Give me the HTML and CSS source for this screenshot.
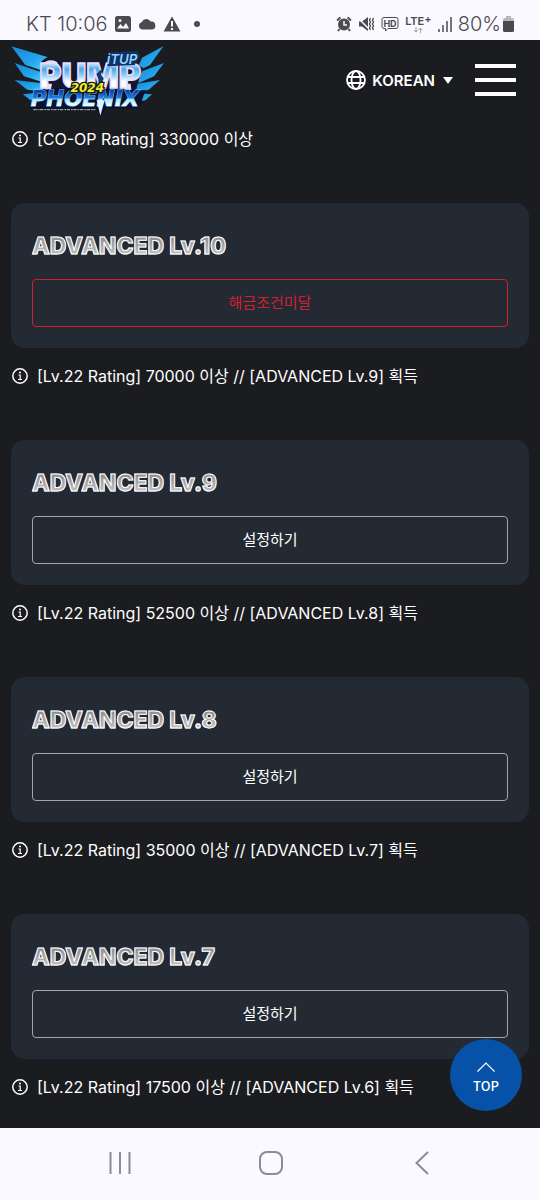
FILE: index.html
```
<!DOCTYPE html>
<html lang="ko">
<head>
    <meta charset="UTF-8">
    <meta name="viewport" content="width=device-width, initial-scale=1.0">
    <title>PUMP IT UP PHOENIX 2024</title>
    <link rel="stylesheet" href="styles.css">
</head>
<body>
    <div class="status-bar">
        <div class="status-left">
            <span class="status-text">KT 10:06</span>
            <svg width="16" height="16" viewBox="0 0 16 16"><rect width="16" height="16" rx="2.5" fill="#4b4b4f"/><path d="M2 12.5 5.5 8l2.5 3 3-4 3 5.500Z" fill="#faf9ff"/><circle cx="5" cy="4.500" r="1.500" fill="#faf9ff"/></svg>
            <svg width="18" height="12" viewBox="0 0 18 12"><path d="M4 11.500a3.700 3.700 0 0 1-.3-7.200A5 5 0 0 1 12.700 3.600 4 4 0 0 1 14 11.500Z" fill="#4b4b4f"/></svg>
            <svg width="18" height="16" viewBox="0 0 18 16"><path d="M9 .5 17.500 15.500H.5Z" fill="#4b4b4f"/><path d="M9 5v5.500M9 12v2" stroke="#faf9ff" stroke-width="2"/></svg>
            <span class="status-dot"></span>
        </div>
        <div class="status-right">
            <svg width="16" height="16" viewBox="0 0 16 16"><circle cx="8" cy="8.500" r="6" fill="#4b4b4f"/><path d="M1 4.500 4.500 1.500M15 4.500 11.500 1.500M3.500 13 2 15M12.500 13 14 15" stroke="#4b4b4f" stroke-width="2"/><path d="M8 5v4h3" fill="none" stroke="#faf9ff" stroke-width="1.500"/></svg>
            <svg width="17" height="16" viewBox="0 0 17 16"><path d="M1 5.500h3L10 1v14l-6-4.500H1Z" fill="#4b4b4f"/><path d="M0 2 12 14" stroke="#faf9ff" stroke-width="1.500"/><path d="M12.500 2l-1 2 1 2-1 2 1 2-1 2 1 2M15.500 2l-1 2 1 2-1 2 1 2-1 2 1 2" fill="none" stroke="#4b4b4f" stroke-width="1.300"/></svg>
            <svg width="18" height="16" viewBox="0 0 18 16"><path d="M3 1.500h12a2 2 0 0 1 2 2v7a2 2 0 0 1-2 2H7l-2.500 2.500V12.500H3a2 2 0 0 1-2-2v-7a2 2 0 0 1 2-2Z" fill="none" stroke="#4b4b4f"/><text class="hd-text" x="9" y="10.500">HD</text></svg>
            <div class="lte">
                <span class="lte-text">LTE<sup class="lte-plus">+</sup></span>
                <svg width="10" height="6" viewBox="0 0 10 6"><path d="M3 0v5M1 3l2 2 2-2M7.500 6V1M5.500 3l2-2 2 2" fill="none" stroke="#a2a2a6"/></svg>
            </div>
            <svg width="14" height="15" viewBox="0 0 14 15"><path d="M1 12v3M5 8v7M9 4v11M13 0v15" stroke="#4b4b4f" stroke-width="1.500"/></svg>
            <span class="status-text">80%</span>
            <svg class="battery" width="11" height="16" viewBox="0 0 11 16"><path d="M3 0h5v2h1.500a1.500 1.500 0 0 1 1.500 1.500V5H0V3.500A1.500 1.500 0 0 1 1.500 2H3Z" fill="#b9b9bd"/><path d="M0 5h11v9.500a1.500 1.500 0 0 1-1.500 1.500h-8A1.500 1.500 0 0 1 0 14.500Z" fill="#4b4b4f"/></svg>
        </div>
    </div>

    <header class="header">
        <a class="logo" href="#" aria-label="Pump It Up Phoenix 2024">
            <svg width="160" height="76" viewBox="24 15 480 228">
                <defs>
                    <linearGradient id="wing" x1="0" x2="1" y1="0" y2="1">
                        <stop offset="0" stop-color="#1685d8"/>
                        <stop offset=".6" stop-color="#24a5ec"/>
                        <stop offset="1" stop-color="#56d2ff"/>
                    </linearGradient>
                    <linearGradient id="pump" gradientUnits="userSpaceOnUse" x1="0" x2="0" y1="78" y2="152">
                        <stop offset="0" stop-color="#d9e9ff"/>
                        <stop offset=".25" stop-color="#4aa9e8"/>
                        <stop offset=".5" stop-color="#8fd0f8"/>
                        <stop offset=".75" stop-color="#ffffff"/>
                    </linearGradient>
                    <linearGradient id="phoenix" gradientUnits="userSpaceOnUse" x1="0" x2="0" y1="162" y2="208">
                        <stop offset="0" stop-color="#0d3fb4"/>
                        <stop offset=".45" stop-color="#1f7fe4"/>
                        <stop offset=".55" stop-color="#a9e6ff"/>
                        <stop offset="1" stop-color="#ffffff"/>
                    </linearGradient>
                </defs>
                <g fill="url(#wing)">
                    <path d="M34 28 142 60 132 102 76 84Z"/>
                    <path d="M44 78 124 106 130 136 72 118Z"/>
                    <path d="M44 129 126 139 132 164 82 158Z"/>
                    <path d="M68 172 126 166 118 190 90 188Z"/>
                    <path d="M490 28 426 62 408 104 450 84Z"/>
                    <path d="M492 78 412 108 416 138 462 118Z"/>
                    <path d="M480 129 412 140 408 166 446 158Z"/>
                    <path d="M456 172 404 168 418 192 436 190Z"/>
                </g>
                <path d="M122 76Q146 50 162 66L196 72 250 68 290 74 322 60 398 72 430 94 416 130 404 164 350 168 250 160 182 164 136 172 144 110Z" fill="#15182c"/>
                <path d="M126 84Q142 62 170 74L176 84H136ZM134 140h22l-4 22-16 6ZM372 140h20l2 20-18 8Z" fill="#e4dcff"/>
                <text class="logo-pump" x="118" y="152">PUMP</text>
                <path d="M301 100q6-6 5 4l-3 9 9 13-4 3-3 27-4-23-5 23-1-30-6-15Z" fill="#153a66"/>
                <path d="M326 46 412 42 420 58 404 84 322 88Z" fill="#123067"/>
                <text class="logo-itup" x="320" y="80">iTUP</text>
                <path d="M104 160 212 152 360 158 436 160 418 214 318 214 302 240 286 216 88 214Z" fill="#0a1230"/>
                <text class="logo-phoenix" x="92" y="208">PHOENIX</text>
                <path d="M290 188 314 190 301 236Z" fill="#dff4ff"/>
                <path d="M100 218h186" stroke="#b6bccc" stroke-width="3" stroke-dasharray="10 3 5 2"/>
                <text class="logo-year" x="212" y="164">2024</text>
            </svg>
        </a>
        <div class="header-actions">
            <button class="language" type="button">
                <svg width="20" height="20" viewBox="0 0 20 20" fill="none" stroke="#fff" stroke-width="1.800"><circle cx="10" cy="10" r="9"/><ellipse cx="10" cy="10" rx="4.500" ry="9"/><path d="M1.500 7h17M1.500 13h17"/></svg>
                KOREAN
                <svg class="caret" width="10" height="7" viewBox="0 0 10 7"><path d="M0 0h10L5 7Z" fill="#fff"/></svg>
            </button>
            <button class="menu" type="button" aria-label="Menu">
                <span class="menu-line"></span>
                <span class="menu-line"></span>
                <span class="menu-line"></span>
            </button>
        </div>
    </header>

    <svg class="symbols" aria-hidden="true">
        <symbol id="info" viewBox="0 0 16 16">
            <circle cx="8" cy="8" r="7.200" fill="none" stroke="#fff" stroke-width="1.500"/>
            <path d="M6.500 7h1.700v4M6 11.500h4" fill="none" stroke="#fff" stroke-width="1.200"/>
            <circle cx="8" cy="4.500" r="1" fill="#fff"/>
        </symbol>
    </svg>

    <main class="titles">
        <p class="note"><svg class="note-icon"><use href="#info"/></svg>[CO-OP Rating] 330000 이상</p>

        <section class="card">
            <h2 class="card-title">ADVANCED Lv.10</h2>
            <button class="card-button locked" type="button">해금조건미달</button>
        </section>
        <p class="note"><svg class="note-icon"><use href="#info"/></svg>[Lv.22 Rating] 70000 이상 // [ADVANCED Lv.9] 획득</p>

        <section class="card">
            <h2 class="card-title">ADVANCED Lv.9</h2>
            <button class="card-button" type="button">설정하기</button>
        </section>
        <p class="note"><svg class="note-icon"><use href="#info"/></svg>[Lv.22 Rating] 52500 이상 // [ADVANCED Lv.8] 획득</p>

        <section class="card">
            <h2 class="card-title">ADVANCED Lv.8</h2>
            <button class="card-button" type="button">설정하기</button>
        </section>
        <p class="note"><svg class="note-icon"><use href="#info"/></svg>[Lv.22 Rating] 35000 이상 // [ADVANCED Lv.7] 획득</p>

        <section class="card">
            <h2 class="card-title">ADVANCED Lv.7</h2>
            <button class="card-button" type="button">설정하기</button>
        </section>
        <p class="note"><svg class="note-icon"><use href="#info"/></svg>[Lv.22 Rating] 17500 이상 // [ADVANCED Lv.6] 획득</p>
    </main>

    <a class="top-button" href="#">
        <svg width="18" height="10" viewBox="0 0 18 10"><path d="M.5 9.500 9 1l8.500 8.500" fill="none" stroke="#fff" stroke-width="1.200"/></svg>
        TOP
    </a>

    <nav class="nav-bar">
        <button class="nav-button" type="button" aria-label="Recents">
            <svg width="24" height="24" viewBox="0 0 24 24"><path d="M2.500 1v22M12 1v22M21.500 1v22" stroke="#8d8c91" stroke-width="2"/></svg>
        </button>
        <button class="nav-button" type="button" aria-label="Home">
            <svg width="24" height="24" viewBox="0 0 24 24"><rect x="1" y="1" width="22" height="22" rx="7" fill="none" stroke="#8d8c91" stroke-width="2"/></svg>
        </button>
        <button class="nav-button" type="button" aria-label="Back">
            <svg width="24" height="24" viewBox="0 0 24 24"><path d="M18 1 6.500 12 18 23" fill="none" stroke="#8d8c91" stroke-width="2"/></svg>
        </button>
    </nav>
</body>
</html>
```
FILE: styles.css
```
* {
    box-sizing: border-box;
}
body {
    display: flex;
    flex-direction: column;
    min-height: 100vh;
    margin: 0;
    background-color: #1b1c1f;
    color: #fff;
    font-family: Inter, "Noto Sans CJK KR", sans-serif;
}
button {
    padding: 0;
    border: 0;
    background: none;
    color: inherit;
    font-family: inherit;
    cursor: pointer;
}
svg {
    display: block;
    flex-shrink: 0;
}
.symbols {
    position: absolute;
    width: 0;
    height: 0;
}

/* phone status bar */
.status-bar {
    display: flex;
    justify-content: space-between;
    align-items: center;
    height: 40px;
    padding: 8px 26px 0;
    background-color: #faf9ff;
    color: #4b4b4f;
}
.status-left,
.status-right {
    display: flex;
    align-items: center;
    gap: 7px;
}
.status-right {
    gap: 6px;
}
.status-text {
    font-size: 20px;
    font-weight: 300;
    line-height: 24px;
}
.status-dot {
    width: 6px;
    height: 6px;
    margin-left: 6px;
    border-radius: 50%;
    background-color: #4b4b4f;
}
.hd-text {
    fill: #4b4b4f;
    font-size: 9px;
    font-weight: 700;
    text-anchor: middle;
}
.lte {
    display: flex;
    flex-direction: column;
    align-items: center;
}
.lte-text {
    display: flex;
    font-size: 11px;
    font-weight: 600;
    line-height: 11px;
}
.lte-plus {
    font-size: 11px;
    line-height: 7px;
}
.battery {
    margin-left: -4px;
}

/* header */
.header {
    display: flex;
    justify-content: space-between;
    align-items: center;
    height: 80px;
    padding: 0 24px 0 8px;
}
.logo-pump {
    fill: url(#pump);
    stroke: #e4dcff;
    stroke-width: 5px;
    font-size: 102px;
    font-weight: 900;
}
.logo-itup {
    fill: #8ad8ff;
    font-size: 40px;
    font-style: italic;
    font-weight: 600;
}
.logo-phoenix {
    fill: url(#phoenix);
    stroke: #7ccdf5;
    stroke-width: 3px;
    paint-order: stroke;
    font-family: "DejaVu Sans", sans-serif;
    font-size: 64px;
    font-style: italic;
    font-weight: 700;
}
.logo-year {
    fill: #f4ee2c;
    stroke: #1a1c10;
    stroke-width: 8px;
    paint-order: stroke;
    font-family: "DejaVu Sans", sans-serif;
    font-size: 36px;
    font-style: italic;
    font-weight: 700;
}
.header-actions {
    display: flex;
    align-items: center;
    gap: 22px;
}
.language {
    display: flex;
    align-items: center;
    gap: 6px;
    font-size: 15px;
    font-weight: 600;
}
.caret {
    margin-left: 2px;
}
.menu {
    display: flex;
    flex-direction: column;
    gap: 10px;
}
.menu-line {
    width: 41px;
    height: 4px;
    background-color: #fff;
}

/* title list */
.titles {
    flex: 1;
    padding: 7px 11px 29px;
}
.note {
    display: flex;
    align-items: center;
    gap: 9px;
    margin: 0 0 52px;
    padding-left: 1px;
    font-size: 16px;
    line-height: 24px;
}
.note:last-child {
    margin-bottom: 0;
}
.note-icon {
    width: 16px;
    height: 16px;
}
.card {
    margin-bottom: 16px;
    padding: 28px 21px 21px;
    border-radius: 14px;
    background-color: #232a33;
}
.card-title {
    width: fit-content;
    margin: 0 0 18px;
    background: linear-gradient(#8c8c8c 20%, #c4c4c4 80%);
    -webkit-background-clip: text;
    background-clip: text;
    color: transparent;
    -webkit-text-stroke: 1px #fff;
    font-size: 23px;
    font-weight: 800;
    line-height: 30px;
}
.card-button {
    display: block;
    width: 100%;
    height: 48px;
    padding-bottom: 3px;
    border: 1px solid #a3a6aa;
    border-radius: 4px;
    font-size: 15px;
}
.card-button.locked {
    border-color: #d4202c;
    color: #d4202c;
}

.top-button {
    position: fixed;
    right: 18px;
    bottom: 89px;
    display: flex;
    flex-direction: column;
    justify-content: center;
    align-items: center;
    gap: 5px;
    width: 72px;
    height: 72px;
    padding-top: 6px;
    border-radius: 50%;
    background-color: #0552a8;
    color: #fff;
    font-family: "Noto Sans CJK KR", sans-serif;
    font-size: 13px;
    font-weight: 500;
    line-height: 18px;
    text-decoration: none;
}

/* phone navigation */
.nav-bar {
    display: flex;
    justify-content: space-around;
    align-items: center;
    height: 72px;
    padding: 0 42px 2px 44px;
    background-color: #faf9ff;
}
.nav-button {
    display: flex;
    justify-content: center;
    align-items: center;
    width: 40px;
    height: 40px;
}
```
